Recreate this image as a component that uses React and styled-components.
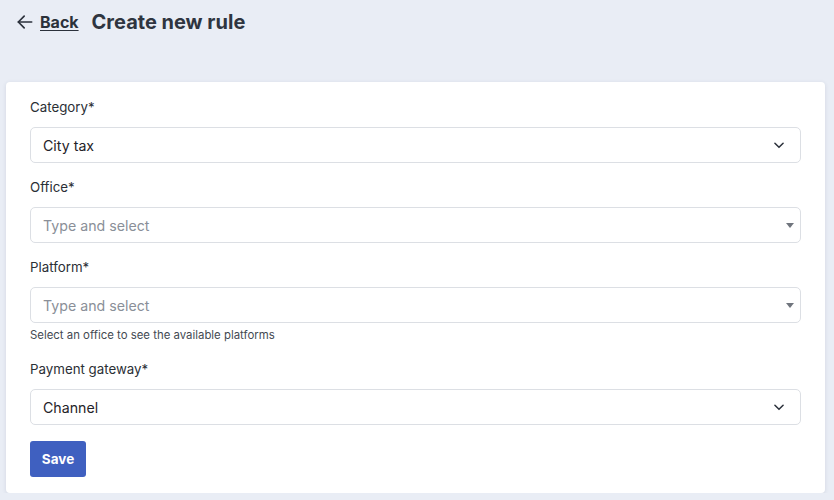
import React from "react";
import styled, { createGlobalStyle } from "styled-components";

const Global = createGlobalStyle`
  html, body { margin: 0; padding: 0; }
  body {
    background: #e9edf5;
    font-family: Inter, "Noto Sans", sans-serif;
    color: #1f2328;
  }
`;

const Page = styled.div`
  padding: 0 9px 0 6px;
`;

const Header = styled.div`
  display: flex;
  align-items: center;
  height: 43px;
  padding-left: 9px;
  gap: 13px;
  margin-bottom: 39px;
`;

const BackLink = styled.a`
  display: flex;
  align-items: center;
  gap: 5px;
  color: #2b313b;
  font-size: 16px;
  font-weight: 700;
  text-decoration: underline;
  text-underline-offset: 2px;
  cursor: pointer;
`;

const Title = styled.h1`
  margin: 0;
  font-size: 20px;
  font-weight: 700;
  color: #2f3540;
`;

const Card = styled.div`
  background: #fff;
  border-radius: 4px;
  box-shadow: 0 1px 4px rgba(40, 50, 80, 0.12);
  padding: 15px 24px 16px;
`;

const Field = styled.div`
  display: flex;
  flex-direction: column;
  margin-bottom: 14px;
`;

const Label = styled.label`
  font-size: 13.3px;
  line-height: 20px;
  color: #2b2f36;
  margin-bottom: 10px;
`;

const Control = styled.div`
  display: flex;
  align-items: center;
  justify-content: space-between;
  height: 36px;
  box-sizing: border-box;
  border: 1px solid #dcdfe4;
  border-radius: 5px;
  padding: 0 ${(p) => (p.$caret ? "6px" : "14px")} 0 12px;
  font-size: 14.2px;
  color: ${(p) => (p.$placeholder ? "#8a8f98" : "#1f2328")};
`;

const Help = styled.div`
  font-size: 11.4px;
  line-height: 14px;
  color: #444a52;
  margin: 5px 0 3px;
`;

const Button = styled.button`
  width: 56px;
  height: 36px;
  border: none;
  border-radius: 3px;
  background: #3f60c0;
  color: #fff;
  font-family: inherit;
  font-size: 13.5px;
  font-weight: 700;
  margin-top: 2px;
  cursor: pointer;
`;

const Arrow = () => (
  <svg width="20" height="20" viewBox="0 0 24 24" fill="none" stroke="#2b313b" strokeWidth="2" strokeLinecap="round" strokeLinejoin="round">
    <path d="M20 12H4" />
    <path d="M11 19l-7-7 7-7" />
  </svg>
);

const Chevron = () => (
  <svg width="14" height="14" viewBox="0 0 24 24" fill="none" stroke="#2b313b" strokeWidth="2.6" strokeLinecap="round" strokeLinejoin="round">
    <path d="M5 9l7 7 7-7" />
  </svg>
);

const Caret = () => (
  <svg width="8" height="5" viewBox="0 0 8 5">
    <path d="M0 0h8L4 5z" fill="#70757d" />
  </svg>
);

const SelectField = ({ label, value, placeholder, caret, help }) => (
  <Field>
    <Label>{label}</Label>
    <Control $placeholder={!!placeholder} $caret={caret}>
      <span>{value || placeholder}</span>
      {caret ? <Caret /> : <Chevron />}
    </Control>
    {help && <Help>{help}</Help>}
  </Field>
);

export default function App() {
  return (
    <>
      <Global />
      <Page>
        <Header>
          <BackLink>
            <Arrow />
            Back
          </BackLink>
          <Title>Create new rule</Title>
        </Header>
        <Card>
          <SelectField label="Category*" value="City tax" />
          <SelectField label="Office*" placeholder="Type and select" caret />
          <SelectField
            label="Platform*"
            placeholder="Type and select"
            caret
            help="Select an office to see the available platforms"
          />
          <SelectField label="Payment gateway*" value="Channel" />
          <Button>Save</Button>
        </Card>
      </Page>
    </>
  );
}
